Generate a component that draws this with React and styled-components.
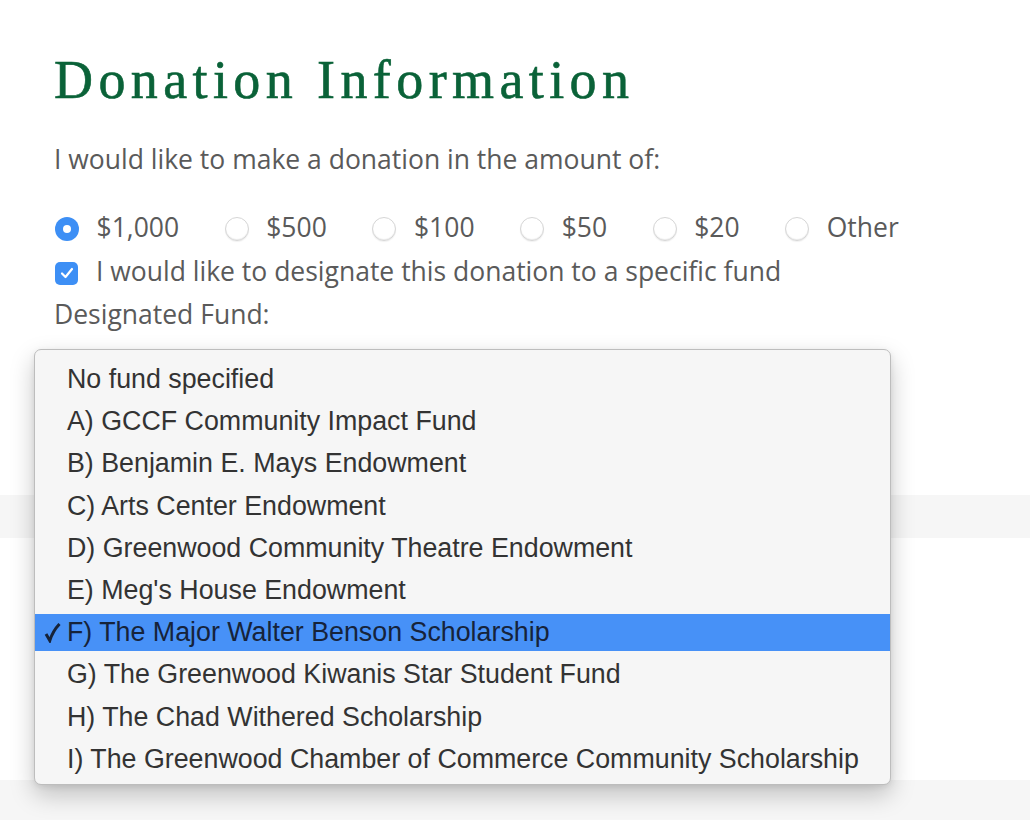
import styled, { createGlobalStyle } from "styled-components";

const amounts = ["$1,000", "$500", "$100", "$50", "$20", "Other"];

const funds = [
    "No fund specified",
    "A) GCCF Community Impact Fund",
    "B) Benjamin E. Mays Endowment",
    "C) Arts Center Endowment",
    "D) Greenwood Community Theatre Endowment",
    "E) Meg's House Endowment",
    "F) The Major Walter Benson Scholarship",
    "G) The Greenwood Kiwanis Star Student Fund",
    "H) The Chad Withered Scholarship",
    "I) The Greenwood Chamber of Commerce Community Scholarship",
];

function App(){
    const selectedAmount = "$1,000";
    const selectedFund = funds[6];

    return(
        <Page>
            <GlobalStyle/>
            <FormSection>
                <Heading>Donation Information</Heading>
                <Intro>I would like to make a donation in the amount of:</Intro>
                <RadioRow>
                    {amounts.map(a => (
                        <RadioItem key={a}>
                            <Radio checked={a == selectedAmount}/>
                            <span>{a}</span>
                        </RadioItem>
                    ))}
                </RadioRow>
                <CheckRow>
                    <Checkbox>
                        <svg width="14" height="12" viewBox="0 0 14 12">
                            <path d="M2 6.5 L5.5 10 L12 2" fill="none" stroke="#fff" strokeWidth="2.2" strokeLinecap="round" strokeLinejoin="round"/>
                        </svg>
                    </Checkbox>
                    <span>I would like to designate this donation to a specific fund</span>
                </CheckRow>
                <FieldLabel>Designated Fund:</FieldLabel>
            </FormSection>
            <GreyBand/>
            <Spacer/>
            <BottomBand/>

            <Menu>
                {funds.map(f => (
                    <MenuRow key={f} selected={f == selectedFund}>
                        <Tick>
                            {f == selectedFund &&
                                <svg width="18" height="20" viewBox="0 0 18 20">
                                    <path d="M2 11 L5.8 17.6 Q8.8 8 15.5 1" fill="none" stroke="#16233a" strokeWidth="3" strokeLinejoin="miter"/>
                                </svg>
                            }
                        </Tick>
                        {f}
                    </MenuRow>
                ))}
            </Menu>
        </Page>
    )
}

const GlobalStyle = createGlobalStyle`
    html, body {
        margin: 0;
        padding: 0;
        background: #ffffff;
    }
`

const Page = styled.div`
    position: relative;
    width: 1030px;
    height: 820px;
    overflow: hidden;
    background: #ffffff;
    display: flex;
    flex-direction: column;
`

const FormSection = styled.div`
    display: flex;
    flex-direction: column;
    padding: 45px 0 0 54px;
    height: 495px;
    box-sizing: border-box;

    font-family: "Open Sans", sans-serif;
    color: #5a5a5a;
    font-size: 26.5px;
`

const Heading = styled.h1`
    margin: 0;
    font-family: "Liberation Serif", serif;
    font-weight: 400;
    font-size: 54px;
    letter-spacing: 5.4px;
    line-height: 70px;
    color: #0a6238;
    -webkit-text-stroke: 0.6px #0a6238;
`

const Intro = styled.div`
    margin-top: 27px;
    line-height: 34px;
`

const RadioRow = styled.div`
    display: flex;
    align-items: center;
    margin-top: 33px;
    height: 36px;
`

const RadioItem = styled.label`
    display: flex;
    align-items: center;
    gap: 17.5px;
    margin-right: 44.6px;
`

const Radio = styled.span`
    box-sizing: border-box;
    width: 24px;
    height: 24px;
    border-radius: 50%;
    margin-top: 4px;
    margin-left: 1px;
    background: ${props => props.checked ? '#3d8ff5' : '#ffffff'};
    border: ${props => props.checked ? '0' : '1px solid #d6d6d6'};
    box-shadow: ${props => props.checked ? 'none' : 'inset 0 -1px 1px rgba(0,0,0,0.08), 0 1px 1px rgba(0,0,0,0.06)'};
    display: flex;
    align-items: center;
    justify-content: center;

    &::after {
        content: "";
        display: ${props => props.checked ? 'block' : 'none'};
        width: 8px;
        height: 8px;
        border-radius: 50%;
        background: #ffffff;
    }
`

const CheckRow = styled.label`
    display: flex;
    align-items: center;
    gap: 18px;
    margin-top: 8px;
    height: 36px;
`

const Checkbox = styled.span`
    width: 23px;
    height: 23px;
    margin-top: 4px;
    margin-left: 1px;
    border-radius: 5px;
    background: #3d8ff5;
    display: flex;
    align-items: center;
    justify-content: center;
`

const FieldLabel = styled.div`
    margin-top: 7px;
    line-height: 36px;
`

const GreyBand = styled.div`
    height: 43px;
    background: #f6f6f6;
`

const Spacer = styled.div`
    height: 242px;
`

const BottomBand = styled.div`
    flex: 1;
    background: #f6f6f6;
`

const Menu = styled.div`
    position: absolute;
    left: 34px;
    top: 349px;
    width: 857px;
    box-sizing: border-box;
    padding: 11px 0 6px;
    background: #f6f6f6;
    border: 1px solid #bdbdbd;
    border-radius: 7px;
    box-shadow: 0 10px 24px rgba(0,0,0,0.22), 0 2px 6px rgba(0,0,0,0.08);

    font-family: "Liberation Sans", Arial, sans-serif;
    font-size: 26.8px;
    color: #333333;
`

const MenuRow = styled.div`
    display: flex;
    align-items: center;
    height: 37px;
    padding-left: 9px;
    background: ${props => props.selected ? '#4791f7' : 'transparent'};
    color: ${props => props.selected ? '#16233a' : '#333333'};

    & + & {
        margin-top: 5.2px;
    }
`

const Tick = styled.span`
    display: flex;
    align-items: center;
    width: 23px;
    height: 100%;
`

export default App;
